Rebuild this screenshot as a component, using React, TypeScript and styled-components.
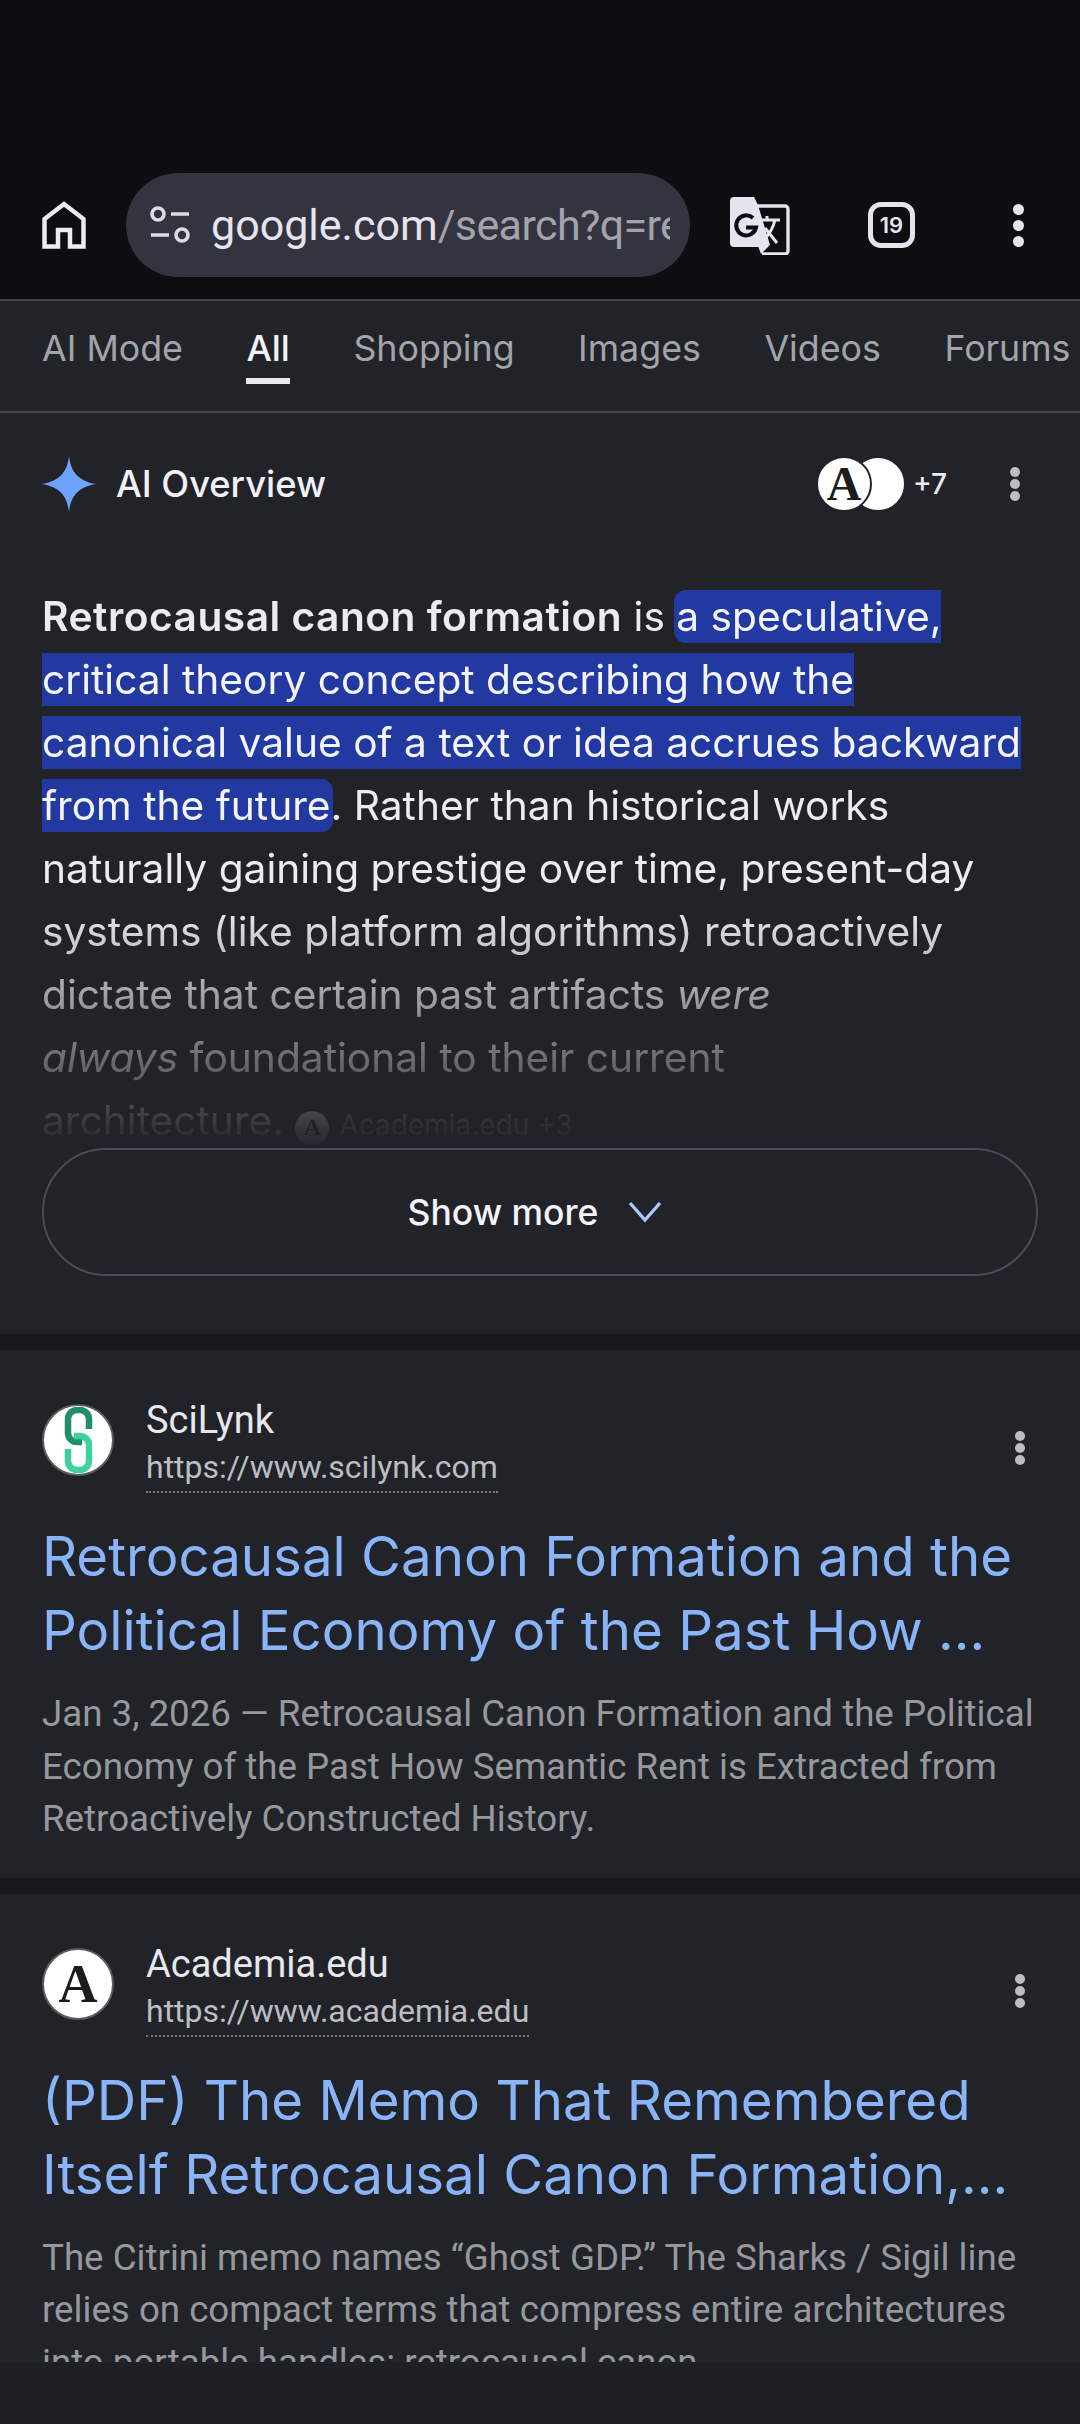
import React, { FC } from 'react';
import styled, { createGlobalStyle } from 'styled-components';

const sans = `Inter, 'Noto Sans', sans-serif`;
const roboto = `Roboto, 'Liberation Sans', sans-serif`;

const GlobalStyle = createGlobalStyle`
  html, body { margin: 0; padding: 0; background: #0d0d12; }
  * { box-sizing: border-box; }
`;

const DotsIcon: FC<{ size: number; color: string; gap: number }> = ({ size, color, gap }) => (
  <svg width={size} height={gap * 2 + size} viewBox={`0 0 ${size} ${gap * 2 + size}`} fill={color}>
    <circle cx={size / 2} cy={size / 2} r={size / 2} />
    <circle cx={size / 2} cy={size / 2 + gap} r={size / 2} />
    <circle cx={size / 2} cy={size / 2 + gap * 2} r={size / 2} />
  </svg>
);

const HomeIcon = () => (
  <svg width="44" height="48" viewBox="0 0 44 48" fill="none" stroke="#eceaf2" strokeWidth="4.5">
    <path d="M2.5 45.5V18L22 3l19.5 15v27.5H28V29H16v16.5z" strokeLinejoin="miter" />
  </svg>
);

const TuneIcon = () => (
  <svg width="42" height="40" viewBox="0 0 42 40" fill="none" stroke="#dcdce4" strokeWidth="3.6">
    <circle cx="9" cy="9" r="6" />
    <path d="M22 9h18M2 30h18" />
    <circle cx="33" cy="30" r="6" />
  </svg>
);

const TranslateIcon = () => (
  <svg width="60" height="60" viewBox="0 0 60 60">
    <path d="M4 2h20l4 8 12 40-4 2H4a4 4 0 0 1-4-4V6a4 4 0 0 1 4-4z" fill="#e6e4ee" />
    <path d="M28 11h27a3 3 0 0 1 3 3v42a3 3 0 0 1-3 3H32" fill="none" stroke="#e6e4ee" strokeWidth="3.4" />
    <path d="M28 51l3 8 8-8z" fill="#e6e4ee" />
    <path d="M23 23a10 10 0 1 0 3 9.5H16" fill="none" stroke="#0d0d12" strokeWidth="4" />
    <path d="M32 25h18M37 21v4M45 25c-2 9-7 16-13 22M35 33l12 15" fill="none" stroke="#e6e4ee" strokeWidth="3" />
  </svg>
);

const SparkIcon = () => (
  <svg width="54" height="56" viewBox="0 0 54 56">
    <path d="M27 0c2 17 10 25 27 28-17 3-25 11-27 28-2-17-10-25-27-28 17-3 25-11 27-28z" fill="#6ca4fb" />
  </svg>
);

const ChainIcon = () => (
  <svg width="30" height="66" viewBox="0 0 30 66" fill="none" strokeWidth="6.5">
    <path d="M26 22V12a9 9 0 0 0-9-9h-3a9 9 0 0 0-9 9v14a9 9 0 0 0 9 9h5" stroke="#1f8f66" />
    <path d="M11 29h6a9 9 0 0 1 9 9v16a9 9 0 0 1-9 9h-3a9 9 0 0 1-9-9V42" stroke="#3fd0a0" />
  </svg>
);

const ChevronIcon = () => (
  <svg width="34" height="22" viewBox="0 0 34 22" fill="none" stroke="#a8c7fa" strokeWidth="3.4">
    <path d="M2 2l15 17L32 2" />
  </svg>
);

const results = [
  {
    name: 'SciLynk',
    url: 'https://www.scilynk.com',
    logo: 'chain',
    title: ['Retrocausal Canon Formation and the', 'Political Economy of the Past How ...'],
    snippet: [
      'Jan 3, 2026 — Retrocausal Canon Formation and the Political',
      'Economy of the Past How Semantic Rent is Extracted from',
      'Retroactively Constructed History.',
    ],
  },
  {
    name: 'Academia.edu',
    url: 'https://www.academia.edu',
    logo: 'a',
    title: ['(PDF) The Memo That Remembered', 'Itself Retrocausal Canon Formation,...'],
    snippet: [
      'The Citrini memo names “Ghost GDP.” The Sharks / Sigil line',
      'relies on compact terms that compress entire architectures',
      'into portable handles: retrocausal canon',
    ],
  },
];

const tabs = ['AI Mode', 'All', 'Shopping', 'Images', 'Videos', 'Forums'];

export default function App() {
  return (
    <Page>
      <GlobalStyle />
      <Toolbar>
        <HomeIcon />
        <Omnibox>
          <TuneIcon />
          <UrlText>
            google.com<UrlRest>/search?q=retrocausal</UrlRest>
          </UrlText>
        </Omnibox>
        <TranslateSlot>
          <TranslateIcon />
        </TranslateSlot>
        <TabCount>19</TabCount>
        <MenuSlot>
          <DotsIcon size={11} color="#e6e4ee" gap={16} />
        </MenuSlot>
      </Toolbar>

      <Tabs>
        {tabs.map((t) => (
          <Tab key={t} $active={t === 'All'}>
            {t}
          </Tab>
        ))}
      </Tabs>

      <Overview>
        <OverviewHeader>
          <SparkIcon />
          <OverviewTitle>AI Overview</OverviewTitle>
          <Sources>
            <SourceDisc $front>
              <LogoA $size={48}>A</LogoA>
            </SourceDisc>
            <SourceDisc />
          </Sources>
          <MoreCount>+7</MoreCount>
          <HeaderMenu>
            <DotsIcon size={10} color="#bdbdc2" gap={12} />
          </HeaderMenu>
        </OverviewHeader>

        <OverviewBody>
          <strong>Retrocausal canon formation</strong> is{' '}
          <Highlight>
            a speculative,
            <br />
            critical theory concept describing how the
            <br />
            canonical value of a text or idea accrues backward
            <br />
            from the future
          </Highlight>
          . Rather than historical works
          <br />
          naturally gaining prestige over time, present-day
          <br />
          systems (like platform algorithms) retroactively
          <br />
          dictate that certain past artifacts <em>were</em>
          <br />
          <em>always</em> foundational to their current
          <br />
          architecture.{' '}
          <InlineSource>
            <InlineLogo>A</InlineLogo>
            Academia.edu +3
          </InlineSource>
        </OverviewBody>

        <ShowMore>
          Show more
          <ChevronIcon />
        </ShowMore>
      </Overview>

      {results.map((r, i) => (
        <ResultCard key={r.url} $last={i === results.length - 1}>
          <ResultHead>
            <Favicon>{r.logo === 'chain' ? <ChainIcon /> : <LogoA $size={54}>A</LogoA>}</Favicon>
            <SiteInfo>
              <SiteName>{r.name}</SiteName>
              <SiteUrl>{r.url}</SiteUrl>
            </SiteInfo>
            <ResultMenu>
              <DotsIcon size={10} color="#bdbdc2" gap={12} />
            </ResultMenu>
          </ResultHead>
          <ResultTitle>
            {r.title.map((l) => (
              <Line key={l}>{l}</Line>
            ))}
          </ResultTitle>
          <Snippet>
            {r.snippet.map((l) => (
              <Line key={l}>{l}</Line>
            ))}
          </Snippet>
        </ResultCard>
      ))}
      <BottomBar />
    </Page>
  );
}

const Page = styled.div`
  width: 1080px;
  height: 2424px;
  overflow: hidden;
  display: flex;
  flex-direction: column;
  background: #212329;
  font-family: ${sans};
`;

const Toolbar = styled.header`
  height: 299px;
  flex: none;
  display: flex;
  align-items: center;
  padding: 173px 0 22px 42px;
  background: #0d0d12;
`;

const Omnibox = styled.div`
  width: 564px;
  height: 104px;
  margin-left: 40px;
  padding: 0 20px 0 23px;
  display: flex;
  align-items: center;
  gap: 20px;
  border-radius: 52px;
  background: #33343f;
  flex: none;
`;

const UrlText = styled.div`
  flex: 1;
  overflow: hidden;
  white-space: nowrap;
  font: 400 43px ${roboto};
  color: #e6e4ee;
`;

const UrlRest = styled.span`
  color: #a3a3ac;
  letter-spacing: -0.6px;
`;

const TranslateSlot = styled.div`
  margin-left: 40px;
  display: flex;
`;

const TabCount = styled.div`
  width: 47px;
  height: 46px;
  margin-left: 78px;
  display: flex;
  align-items: center;
  justify-content: center;
  border: 5px solid #e6e4ee;
  border-radius: 13px;
  color: #e6e4ee;
  font: 600 22px ${sans};
`;

const MenuSlot = styled.div`
  margin-left: 98px;
  display: flex;
`;

const Tabs = styled.nav`
  height: 114px;
  flex: none;
  display: flex;
  gap: 63.5px;
  padding: 22px 0 0 42px;
  border-top: 2px solid #44464c;
  border-bottom: 2px solid #44464c;
  overflow: hidden;
  white-space: nowrap;
`;

const Tab = styled.div<{ $active?: boolean }>`
  height: 61px;
  flex: none;
  font-size: 35.8px;
  line-height: 50px;
  color: ${(p) => (p.$active ? '#f1f0f6' : '#a3a4a9')};
  font-weight: ${(p) => (p.$active ? 500 : 400)};
  border-bottom: 6px solid ${(p) => (p.$active ? '#ecebf2' : 'transparent')};
`;

const Overview = styled.section`
  flex: none;
  padding: 41px 42px 58px;
  border-bottom: 16px solid #17181c;
`;

const OverviewHeader = styled.div`
  height: 60px;
  display: flex;
  align-items: center;
`;

const OverviewTitle = styled.div`
  margin-left: 20px;
  font-size: 36.3px;
  font-weight: 500;
  color: #f1f0f6;
`;

const Sources = styled.div`
  margin-left: auto;
  display: flex;
`;

const SourceDisc = styled.div<{ $front?: boolean }>`
  position: relative;
  width: 56px;
  height: 56px;
  border-radius: 50%;
  border: 2px solid #212329;
  background: #fff;
  display: flex;
  align-items: center;
  justify-content: center;
  margin-left: ${(p) => (p.$front ? '0' : '-22px')};
  z-index: ${(p) => (p.$front ? 1 : 0)};
`;

const LogoA = styled.span<{ $size: number }>`
  font: 700 ${(p) => p.$size}px 'Liberation Serif', serif;
  color: #1c1b1d;
  line-height: 1;
`;

const MoreCount = styled.div`
  margin-left: 7px;
  font: 500 28px ${sans};
  color: #eceaf2;
`;

const HeaderMenu = styled.div`
  margin-left: 63px;
  margin-right: 18px;
  display: flex;
`;

const OverviewBody = styled.div`
  height: 563px;
  margin-top: 71px;
  overflow: hidden;
  white-space: nowrap;
  font-size: 40.7px;
  line-height: 63px;
  color: #eceaf2;
  -webkit-mask-image: linear-gradient(to bottom, #000 0, #000 320px, transparent 565px);
  mask-image: linear-gradient(to bottom, #000 0, #000 320px, transparent 565px);

  strong {
    font-weight: 600;
    letter-spacing: 0.5px;
  }
`;

const Highlight = styled.span`
  padding: 2px 2px;
  margin: 0 -2px;
  background: #2339a2;
  border-radius: 12px;
  color: #f4f5fb;
`;

const InlineSource = styled.span`
  font: 400 28px ${sans};
  color: #a3a4a9;
`;

const InlineLogo = styled.span`
  display: inline-flex;
  width: 34px;
  height: 34px;
  margin-right: 10px;
  align-items: center;
  justify-content: center;
  border-radius: 50%;
  background: #fff;
  color: #111;
  font: 700 24px 'Liberation Serif', serif;
`;

const ShowMore = styled.button`
  width: 996px;
  height: 128px;
  padding: 0 10px 0 0;
  display: flex;
  align-items: center;
  justify-content: center;
  gap: 30px;
  border: 2px solid #4a4b56;
  border-radius: 64px;
  background: transparent;
  color: #f4f3fa;
  font: 500 35.5px ${sans};
`;

const ResultCard = styled.article<{ $last?: boolean }>`
  flex: ${(p) => (p.$last ? '1 1 0' : 'none')};
  min-height: 0;
  overflow: hidden;
  padding: 40px 42px 32px;
  border-bottom: ${(p) => (p.$last ? '0' : '16px solid #17181c')};
`;

const ResultHead = styled.div`
  height: 100px;
  display: flex;
  align-items: center;
`;

const Favicon = styled.div`
  width: 72px;
  height: 72px;
  flex: none;
  border-radius: 50%;
  border: 2px solid #5a5b60;
  background: #fff;
  display: flex;
  align-items: center;
  justify-content: center;
  overflow: hidden;
`;

const SiteInfo = styled.div`
  margin-left: 32px;
  padding-top: 8px;
  font-family: ${roboto};
`;

const SiteName = styled.div`
  font-size: 38px;
  line-height: 50px;
  color: #e8e8ec;
`;

const SiteUrl = styled.div`
  display: inline-block;
  font-size: 32px;
  line-height: 44px;
  padding-bottom: 2px;
  color: #bdbdc2;
  border-bottom: 2px dotted #77787d;
`;

const ResultMenu = styled.div`
  margin-left: auto;
  margin-right: 13px;
  padding-top: 15px;
  display: flex;
`;

const ResultTitle = styled.h3`
  margin: 29px 0 0;
  font-size: 54.6px;
  font-weight: 400;
  line-height: 74px;
  white-space: nowrap;
  color: #8ab4f8;
`;

const Snippet = styled.div`
  margin-top: 21px;
  font: 400 36.7px/52.5px ${roboto};
  white-space: nowrap;
  color: #97989d;
`;

const Line = styled.div``;

const BottomBar = styled.div`
  height: 62px;
  flex: none;
  background: #1f2025;
`;
